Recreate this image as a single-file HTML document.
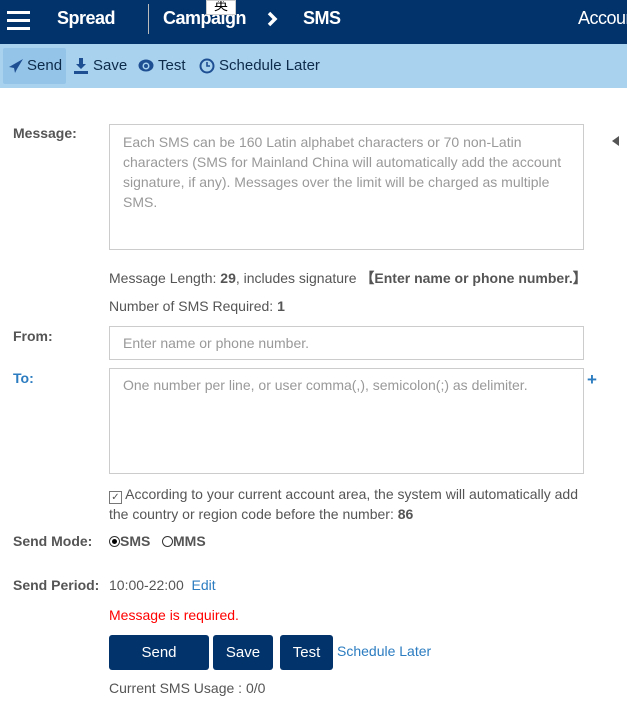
<!DOCTYPE html>
<html><head><style>
body{margin:0;width:627px;height:721px;overflow:hidden;background:#fff;font-family:"Liberation Sans",sans-serif;font-size:14px;color:#555;position:relative}
.a{position:absolute;white-space:nowrap}
.hdr{position:absolute;left:0;top:0;width:627px;height:44px;background:#03336b}
.tb{position:absolute;left:0;top:44px;width:627px;height:44px;background:#a9d2ef}
.h{color:#fff;font-size:18px;font-weight:bold;top:8px;letter-spacing:-0.5px}
.t{color:#0d2b4a;font-size:15px;top:57px}
.lbl{font-weight:bold;color:#555;font-size:14px;left:13px}
.box{position:absolute;border:1px solid #ccc;box-sizing:border-box;left:109px;width:475px;color:#999;padding:8px 13px;font-size:14px;line-height:20px}
.btn{position:absolute;top:635px;height:35px;background:#03336b;color:#fff;border-radius:3px;text-align:center;line-height:35px;font-size:15px}
.rd{display:inline-block;width:11px;height:11px;border:1px solid #333;border-radius:50%;box-sizing:border-box;vertical-align:-1px;position:relative}
</style></head><body>
<div class="hdr"></div>
<div class="a" style="left:7px;top:11px;width:23px;height:3px;background:#fff;box-shadow:0 8px 0 #fff,0 16px 0 #fff"></div>
<div class="a h" style="left:57px">Spread</div>
<div class="a" style="left:148px;top:4px;width:1px;height:30px;background:#bbb"></div>
<div class="a h" style="left:163px">Campaign</div>
<div class="a" style="left:206px;top:0;width:30px;height:15px;background:#fff;border:1px solid #ccc;box-sizing:border-box;font-family:'Noto Sans CJK SC',sans-serif;color:#000;font-size:14px;line-height:8px;text-align:center;overflow:hidden">英</div>
<svg class="a" style="left:266px;top:11px" width="14" height="16" viewBox="0 0 14 16"><path d="M3 2l6 6-6 6" fill="none" stroke="#fff" stroke-width="3.5"/></svg>
<div class="a h" style="left:303px">SMS</div>
<div class="a h" style="left:578px;font-weight:normal">Account</div>
<div class="tb"></div>
<div class="a" style="left:3px;top:48px;width:63px;height:36px;background:#95c4e9;border-radius:2px"></div>
<svg class="a" style="left:8px;top:58px" width="16" height="16" viewBox="0 0 16 16"><path d="M15 1L1 9l5 1 1 5 2-4zM6 10l9-9" fill="#1e4f93"/></svg>
<div class="a t" style="left:27px">Send</div>
<svg class="a" style="left:73px;top:57px" width="16" height="17" viewBox="0 0 16 17"><path d="M6 1h4v6h3l-5 5-5-5h3z M1 14h14v3H1z" fill="#1e4f93"/></svg>
<div class="a t" style="left:93px">Save</div>
<svg class="a" style="left:138px;top:59px" width="16" height="13" viewBox="0 0 16 13"><ellipse cx="8" cy="6.5" rx="7.5" ry="6" fill="#1e4f93"/><circle cx="8" cy="7" r="3.5" fill="#a9d2ef"/><circle cx="8" cy="7" r="2" fill="#1e4f93"/></svg>
<div class="a t" style="left:158px">Test</div>
<svg class="a" style="left:199px;top:58px" width="16" height="16" viewBox="0 0 16 16"><circle cx="8" cy="8" r="6.5" fill="none" stroke="#1e4f93" stroke-width="2"/><path d="M8 4v4h3" fill="none" stroke="#1e4f93" stroke-width="1.6"/></svg>
<div class="a t" style="left:219px">Schedule Later</div>

<div class="a lbl" style="top:125px">Message:</div>
<div class="a" style="left:612px;top:136px;width:0;height:0;border:5px solid transparent;border-right:7px solid #555;border-left:0"></div>
<div class="box" style="top:124px;height:126px;padding-top:7px">Each SMS can be 160 Latin alphabet characters or 70 non-Latin characters (SMS for Mainland China will automatically add the account signature, if any). Messages over the limit will be charged as multiple SMS.</div>
<div class="a" style="left:109px;top:268px">Message Length: <b>29</b>, includes signature <b>【Enter name or phone number.】</b></div>
<div class="a" style="left:109px;top:298px">Number of SMS Required: <b>1</b></div>
<div class="a lbl" style="top:328px">From:</div>
<div class="box" style="top:326px;height:34px;padding-top:6px">Enter name or phone number.</div>
<div class="a lbl" style="top:370px;color:#2b7cc0">To:</div>
<div class="box" style="top:368px;height:106px;padding-top:6px">One number per line, or user comma(,), semicolon(;) as delimiter.</div>
<div class="a" style="left:587px;top:370px;color:#2b7cc0;font-weight:bold;font-size:17px">+</div>
<div class="a" style="left:109px;top:484px;line-height:20px;white-space:normal;width:480px"><span style="display:inline-block;width:11px;height:11px;border:1px solid #777;vertical-align:-1px;font-size:10px;line-height:11px;text-align:center">✓</span> According to your current account area, the system will automatically add the country or region code before the number: <b>86</b></div>
<div class="a lbl" style="top:533px">Send Mode:</div>
<div class="a" style="left:109px;top:533px;font-weight:bold"><span class="rd"><span style="position:absolute;left:2px;top:2px;width:5px;height:5px;border-radius:50%;background:#000"></span></span>SMS &nbsp;&nbsp;<span class="rd"></span>MMS</div>
<div class="a lbl" style="top:577px">Send Period:</div>
<div class="a" style="left:109px;top:577px">10:00-22:00 &nbsp;<span style="color:#2b7cc0">Edit</span></div>
<div class="a" style="left:109px;top:607px;color:#f00">Message is required.</div>
<div class="btn" style="left:109px;width:100px">Send</div>
<div class="btn" style="left:213px;width:60px">Save</div>
<div class="btn" style="left:280px;width:53px">Test</div>
<div class="a" style="left:337px;top:643px;color:#2b7cc0">Schedule Later</div>
<div class="a" style="left:109px;top:680px">Current SMS Usage : 0/0</div>
</body></html>
